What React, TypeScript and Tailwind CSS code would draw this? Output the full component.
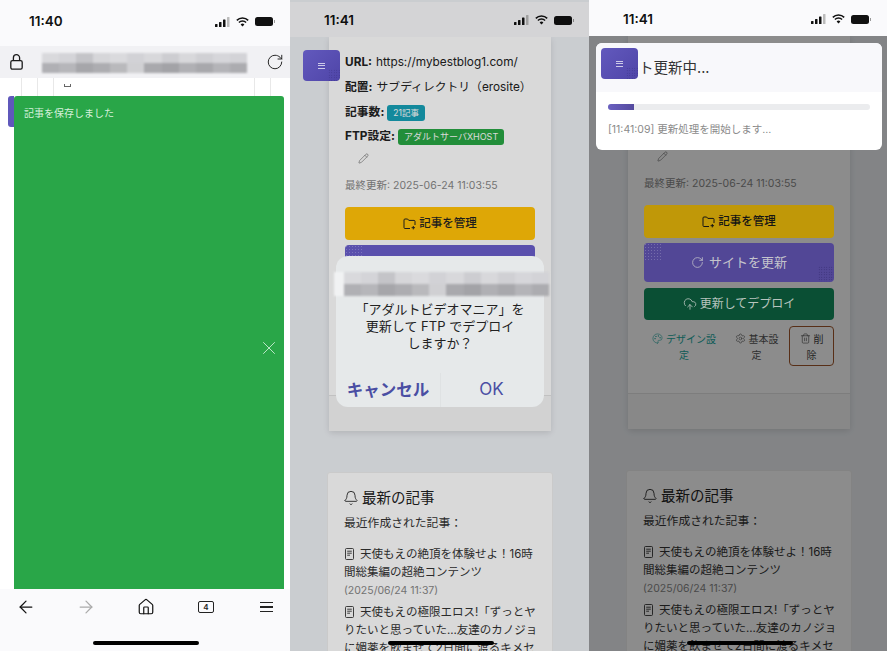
import React from 'react';
import {
  ArrowLeft,
  ArrowRight,
  Bell,
  CloudUpload,
  House,
  Palette,
  Pencil,
  RotateCw,
  Settings,
  Trash2,
  X,
} from 'lucide-react';

const mosaicTop = ['#d9d9dc', '#d4d4d8', '#c4c4c8', '#d6d6d9', '#dadadd', '#d2d2d6', '#d8d8db', '#cdcdd1', '#d8d8db', '#d0d0d4', '#d6d6da', '#d3d3d7'];
const mosaicBottom = ['#b0b0b4', '#b6b6ba', '#a6a6aa', '#adadb1', '#b9b9bc', '#d0d0d3', '#a9a9ad', '#a3a3a7', '#b0b0b4', '#a8a8ac', '#b4b4b8', '#acacb0'];

function Mosaic({ className }: { className: string }) {
  return (
    <div className={`flex flex-col blur-[1px] ${className}`}>
      <div className="flex flex-1">
        {mosaicTop.map((c, i) => (
          <div key={i} className="flex-1" style={{ backgroundColor: c }} />
        ))}
      </div>
      <div className="flex flex-1">
        {mosaicBottom.map((c, i) => (
          <div key={i} className="flex-1" style={{ backgroundColor: c }} />
        ))}
      </div>
    </div>
  );
}

function StatusBar({ time, className }: { time: string; className: string }) {
  return (
    <div className={`relative z-10 flex shrink-0 items-center justify-between text-[#111] ${className}`}>
      <span className="text-[13.5px] font-semibold">{time}</span>
      <div className="flex items-center gap-[6px]">
        <svg width="15" height="10" viewBox="0 0 15 10" fill="currentColor">
          <rect x="0" y="7" width="2.5" height="3" rx="0.6" />
          <rect x="4" y="5" width="2.5" height="5" rx="0.6" />
          <rect x="8" y="2.5" width="2.5" height="7.5" rx="0.6" />
          <rect x="12" y="0" width="2.5" height="10" rx="0.6" fill="#bbb" />
        </svg>
        <svg width="13" height="10" viewBox="0 0 13 10" fill="none" stroke="currentColor" strokeWidth="1.5">
          <path d="M0.8 3.4a8 8 0 0 1 11.4 0" />
          <path d="M2.9 5.6a5 5 0 0 1 7.2 0" />
          <path d="M4.6 7.4a2.6 2.6 0 0 1 3.8 0L6.5 9.6z" fill="currentColor" stroke="none" />
        </svg>
        <div className="flex items-center gap-[1px]">
          <div className="h-[9px] w-[18px] rounded-[2.5px] bg-[#111]" />
          <div className="h-[3px] w-[1px] bg-[#999]" />
        </div>
      </div>
    </div>
  );
}

function HomeBar({ className }: { className: string }) {
  return <div className={`absolute z-30 h-[4px] w-[106px] rounded-full bg-black ${className}`} />;
}

function MenuTab({ className }: { className: string }) {
  return (
    <div className={`absolute z-30 flex h-[31px] w-[37px] items-center justify-center overflow-hidden rounded-[4px] bg-[linear-gradient(135deg,#6259bd,#4f45a8)] ${className}`}>
      <div className="absolute right-0 bottom-0 size-[12px] bg-[radial-gradient(#2c247080_0.6px,transparent_0.7px)] bg-[length:2.5px_2.5px]" />
      <div className="flex w-[7px] flex-col gap-[1.5px]">
        <div className="h-[1px] bg-white/70" />
        <div className="h-[1px] bg-white/70" />
        <div className="h-[1px] bg-white/70" />
      </div>
    </div>
  );
}

function DocIcon() {
  return (
    <svg className="mr-[6px] ml-[1px] inline -translate-y-[1px] align-middle" width="9" height="12" viewBox="0 0 9 12" fill="none" stroke="currentColor" strokeWidth="0.9">
      <rect x="0.5" y="0.5" width="8" height="11" rx="1" />
      <path d="M2.2 3.2h4.6M2.2 5.2h4.6M2.2 7.2h2.8" />
    </svg>
  );
}

function FolderPlusIcon() {
  return (
    <svg width="13" height="12" viewBox="0 0 13 12" fill="none" stroke="currentColor" strokeWidth="1">
      <path d="M7 10.5H2a1 1 0 0 1-1-1V2a1 1 0 0 1 1-1h2.6l1.2 1.4H11a1 1 0 0 1 1 1V7" />
      <path d="M10.3 8v3.4M8.6 9.7H12" />
    </svg>
  );
}

function Article({ title, date }: { title: string; date?: string }) {
  return (
    <div className="mt-[1px]">
      <p className="text-[11.5px] leading-[18px] text-[#333]">
        <DocIcon />
        {title}
      </p>
      {date && <p className="mt-[1px] mb-[3px] text-[10.5px] leading-[18px] text-[#888]">{date}</p>}
    </div>
  );
}

type PageProps = {
  top: string;
  yellow: string;
  purple: string;
  green: string;
};

function SitePage({ top, yellow, purple, green }: PageProps) {
  return (
    <div className={`ml-[39px] w-[222px] ${top}`}>
      <div className="rounded-b-[3px] bg-white shadow-[0_2px_6px_rgba(0,0,0,0.12)]">
        <div className="px-4 pt-[13px] text-[11.8px] text-[#222]">
          <div className="flex h-[25px] items-center">
            <b className="mr-1">URL:</b>https://mybestblog1.com/
          </div>
          <div className="flex h-[25px] items-center whitespace-nowrap">
            <b className="mr-1">配置:</b>サブディレクトリ（erosite）
          </div>
          <div className="flex h-[25px] items-center">
            <b className="mr-[3px]">記事数:</b>
            <span className="rounded-[3px] bg-[#17a2b8] px-[6px] py-[2px] text-[8.5px] leading-[12px] text-white">21記事</span>
          </div>
          <div className="flex h-[24px] items-center">
            <b className="mr-[3px]">FTP設定:</b>
            <span className="rounded-[3px] bg-[#28a745] px-[6px] py-[2px] text-[9px] leading-[12px] text-white">アダルトサーバXHOST</span>
          </div>
          <div className="flex h-[19px] items-center pl-[13px]">
            <Pencil className="size-[11px] text-[#666]" strokeWidth={1.3} />
          </div>
          <p className="mt-[8px] text-[10.5px] leading-[20px] text-[#888]">最終更新: 2025-06-24 11:03:55</p>
          <div className={`relative z-30 mt-[11px] flex h-[33px] items-center justify-center gap-[3px] rounded-[4px] text-[11.5px] font-medium ${yellow}`}>
            <FolderPlusIcon />
            記事を管理
          </div>
          <div className={`relative z-30 mt-[5px] flex h-[39px] items-center justify-center gap-[5px] overflow-hidden rounded-[4px] text-[13px] ${purple}`}>
            <div className="absolute top-0 left-0 size-[18px] bg-[radial-gradient(#ffffff33_0.6px,transparent_0.7px)] bg-[length:3px_3px]" />
            <div className="absolute right-0 bottom-0 size-[16px] bg-[radial-gradient(#1f185080_0.6px,transparent_0.7px)] bg-[length:2.5px_2.5px]" />
            <RotateCw className="size-[13px]" strokeWidth={1.4} />
            サイトを更新
          </div>
          <div className={`relative z-30 mt-[6px] flex h-[32px] items-center justify-center gap-[3px] rounded-[4px] text-[12px] ${green}`}>
            <CloudUpload className="size-[14px]" strokeWidth={1.4} />
            更新してデプロイ
          </div>
          <div className="mt-[6px] flex h-[40px] text-[10px] leading-[16px]">
            <div className="w-[80px] px-[5px] pt-[5px] text-center text-[#20a8a0]">
              <Palette className="mr-[3px] inline size-[11px] align-[-1px]" strokeWidth={1.3} />
              デザイン設定
            </div>
            <div className="w-[65px] px-[9px] pt-[5px] text-center text-[#555]">
              <Settings className="mr-[3px] inline size-[11px] align-[-1px]" strokeWidth={1.3} />
              基本設定
            </div>
            <div className="w-[45px] rounded-[4px] border border-[#a0562a] px-[8px] pt-[4px] text-center text-[#444]">
              <Trash2 className="mr-[3px] inline size-[11px] align-[-1px]" strokeWidth={1.3} />
              削除
            </div>
          </div>
        </div>
        <div className="mt-[27px] h-[36px] border-t border-[#e3e3e3] bg-[#f7f7f7]" />
      </div>
      <div className="mt-[41px] -ml-[2px] w-[226px] rounded-[3px] border border-[#eee] bg-white pt-[13px] pr-[12px] pb-4 pl-4">
        <h3 className="flex h-[24px] items-center gap-[3px] text-[14.5px] text-[#222]">
          <Bell className="-ml-[1px] size-[16px]" strokeWidth={1.3} />
          最新の記事
        </h3>
        <p className="mt-[3px] mb-[12px] text-[11.8px] leading-[20px] text-[#333]">最近作成された記事：</p>
        <Article title="天使もえの絶頂を体験せよ！16時間総集編の超絶コンテンツ" date="(2025/06/24 11:37)" />
        <Article title="天使もえの極限エロス!「ずっとヤりたいと思っていた...友達のカノジョに媚薬を飲ませて2日間に渡るキメセ" />
      </div>
    </div>
  );
}

export default function App() {
  return (
    <div className="flex h-[651px] w-[887px] overflow-hidden bg-white font-['Inter','Noto_Sans_CJK_JP',sans-serif]">
      {/* left phone: toast */}
      <div className="relative flex h-full w-[290px] shrink-0 flex-col overflow-hidden bg-[#fafafc]">
        <StatusBar time="11:40" className="h-[46px] pr-[15px] pb-[3px] pl-[29px]" />
        <div className="flex h-[32px] shrink-0 items-center justify-between bg-[#f1f1f4] pr-[6px] pl-[10px]">
          <svg width="13" height="16" viewBox="0 0 13 16" fill="none" stroke="#1a1a1a" strokeWidth="1.3">
            <rect x="0.8" y="6.6" width="11.4" height="8.6" rx="1.6" />
            <path d="M3.4 6.4V3.8a3.1 3.1 0 0 1 6.2 0v2.6" />
          </svg>
          <RotateCw className="size-[18px] text-[#222]" strokeWidth={1.3} />
        </div>
        <Mosaic className="absolute top-[53px] left-[42px] z-10 h-[20px] w-[205px]" />
        <div className="flex flex-1 flex-col bg-white">
          <div className="flex h-[18px] pl-[21px]">
            <div className="w-[16px] border-l border-[#e8e8e8]" />
            <div className="w-[16px] border-l border-[#e8e8e8]" />
            <div className="relative w-[41px] border-l border-[#e8e8e8]">
              <div className="absolute top-[6px] left-[10px] h-[3px] w-[7px] border-x border-b border-[#666]" />
            </div>
            <div className="w-[161px] border-r border-[#e8e8e8]" />
            <div className="w-[16px] border-r border-[#e8e8e8]" />
          </div>
          <div className="relative ml-[14px] w-[270px] flex-1 rounded-t-[3px] bg-[#29a648]">
            <div className="absolute top-0 -left-[6px] h-[31px] w-[6px] rounded-l-[3px] bg-[#5f58bb]" />
            <p className="pt-[11px] pl-[10px] text-[10px] leading-[13px] text-[#d6f0dc]">記事を保存しました</p>
            <X className="absolute top-[241px] right-[4px] size-[22px] text-[#c8ecd2]" strokeWidth={1} />
          </div>
        </div>
        <div className="flex h-[62px] shrink-0 items-start bg-[#fafafc] pt-[8px]">
          <div className="-ml-[4px] flex">
            <div className="flex h-[20px] w-[60px] items-center justify-center">
              <ArrowLeft className="size-[20px] text-[#111]" strokeWidth={1.5} />
            </div>
            <div className="flex h-[20px] w-[60px] items-center justify-center">
              <ArrowRight className="size-[20px] text-[#aaa]" strokeWidth={1.5} />
            </div>
            <div className="flex h-[20px] w-[60px] items-center justify-center">
              <House className="size-[18px] text-[#111]" strokeWidth={1.6} />
            </div>
            <div className="flex h-[20px] w-[60px] items-center justify-center">
              <div className="flex h-[12px] w-[16px] items-center justify-center rounded-[2px] border-[1.3px] border-[#222] text-[8px] leading-none font-semibold text-[#222]">4</div>
            </div>
            <div className="flex h-[20px] w-[60px] items-center justify-center">
              <div className="flex w-[13px] flex-col gap-[3px]">
                <div className="h-[1.5px] bg-[#222]" />
                <div className="h-[1.5px] bg-[#222]" />
                <div className="h-[1.5px] bg-[#222]" />
              </div>
            </div>
          </div>
        </div>
        <HomeBar className="top-[641px] left-[93px]" />
      </div>

      {/* middle phone: confirm dialog */}
      <div className="relative flex h-full w-[299px] shrink-0 flex-col overflow-hidden bg-[#eef1f5]">
        <StatusBar time="11:41" className="mt-[2px] h-[35px] bg-[#fafafc] pt-[1px] pr-[15px] pl-[34px]" />
        <SitePage top="mt-0" yellow="bg-[#dea706] text-[#1d1d1d]" purple="bg-[#5a50ad] text-[#dcdcdc]" green="bg-[#15734a] text-[#dcdcdc]" />
        <div className="absolute inset-0 z-20 bg-black/15" />
        <MenuTab className="top-[50px] left-[13px]" />
        <div className="absolute top-[256px] left-[46px] z-30 flex h-[151px] w-[208px] flex-col rounded-[12px] bg-[#e6e9ea]">
          <p className="mt-[45px] text-center text-[13px] leading-[17px] text-[#222]">
            「アダルトビデオマニア」を
            <br />
            更新して FTP でデプロイ
            <br />
            しますか？
          </p>
          <div className="mt-auto flex h-[34px] items-center">
            <div className="flex h-full w-[105px] items-center justify-center border-r border-[#dfe2e3] text-[16.5px] font-semibold text-[#4a4ea3]">キャンセル</div>
            <div className="flex h-full flex-1 items-center justify-center pr-[2px] text-[17px] text-[#4a4ea3]">OK</div>
          </div>
        </div>
        <Mosaic className="absolute top-[272px] left-[44px] z-40 h-[24px] w-[215px] bg-[#f1f2f3] pl-[10px]" />
        <HomeBar className="top-[641px] left-[98px]" />
      </div>

      {/* right phone: progress */}
      <div className="relative flex h-full w-[298px] shrink-0 flex-col overflow-hidden bg-[#eef1f5]">
        <StatusBar time="11:41" className="h-[36px] bg-[#fafafc] pt-[2px] pr-[16px] pl-[34px]" />
        <SitePage top="-mt-[1px]" yellow="bg-[#c09808] text-[#141414]" purple="bg-[#524796] text-[#c4c4cc]" green="bg-[#0a4f34] text-[#b8c4be]" />
        <div className="absolute inset-x-0 top-[36px] bottom-0 z-20 bg-black/45" />
        <div className="absolute top-[43px] left-[7px] z-30 w-[286px] overflow-hidden rounded-[6px] bg-white">
          <div className="flex h-[49px] items-center bg-[#f8f8fb] pl-[14px] text-[14.5px] text-[#333]">サイト更新中...</div>
          <div className="px-[12px] pt-[12px] pb-[12px]">
            <div className="h-[6px] rounded-full bg-[#ebecee]">
              <div className="h-full w-[10%] rounded-l-full bg-[linear-gradient(90deg,#6a60c0,#544a9e)]" />
            </div>
            <p className="mt-[12px] text-[10.5px] leading-[16px] text-[#8a8a8a]">[11:41:09] 更新処理を開始します...</p>
          </div>
        </div>
        <MenuTab className="top-[48px] left-[12px]" />
        <HomeBar className="top-[641px] left-[98px]" />
      </div>
    </div>
  );
}
